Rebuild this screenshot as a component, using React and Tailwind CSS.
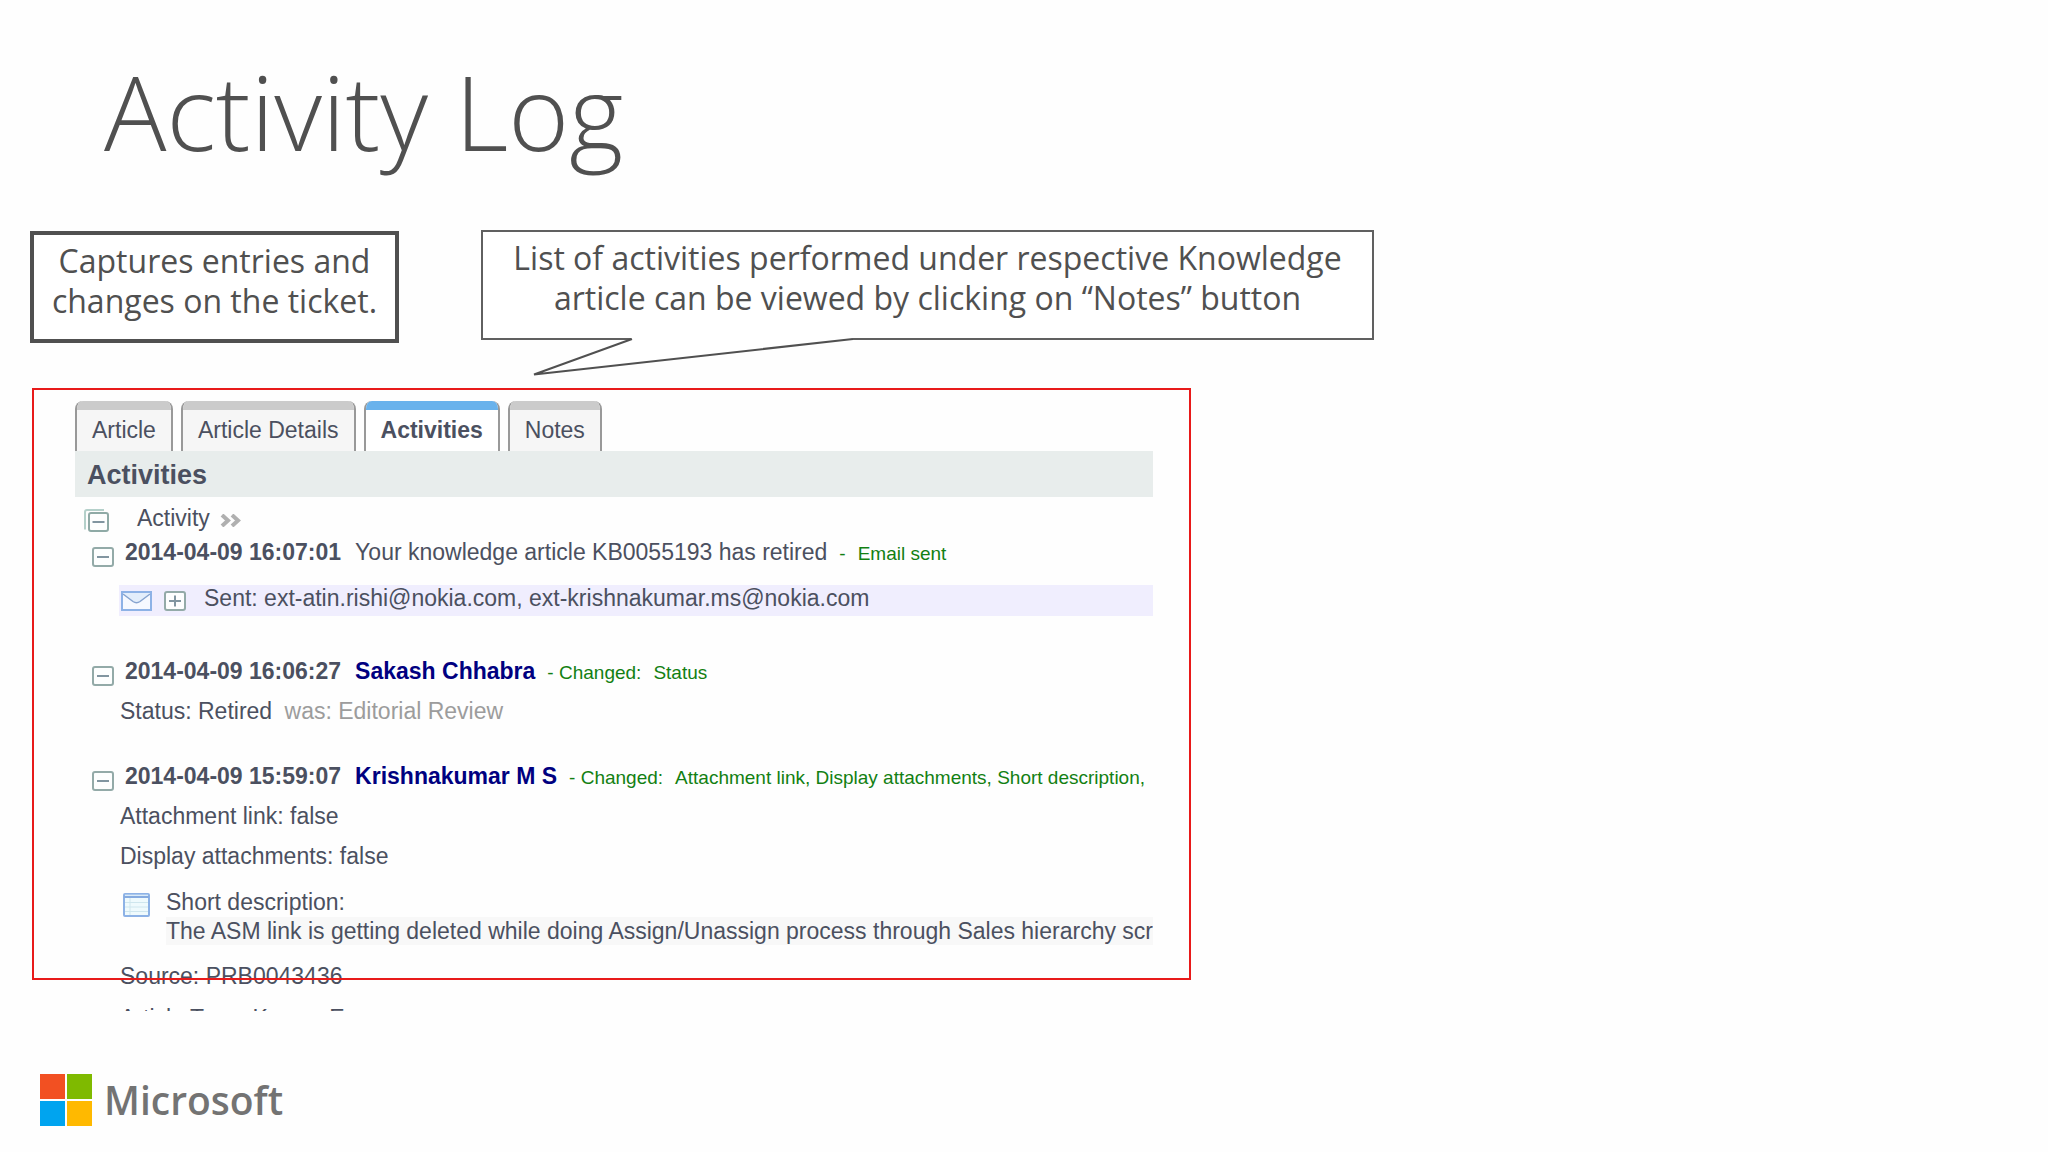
import React, { useState } from 'react';

const tabs = ['Article', 'Article Details', 'Activities', 'Notes'];

// Small square box with a minus or plus sign
const ToggleIcon = ({ open }) => (
  <svg width="22" height="20" viewBox="0 0 22 20" fill="none" strokeWidth="2">
    <rect x="1" y="1" width="20" height="18" rx="2" fill="#fdfefe" stroke="#93aaa8" />
    <path d={open ? 'M5 10H17' : 'M5 10H17M11 4.5V15.5'} stroke="#8195a0" />
  </svg>
);

const StackIcon = () => (
  <svg width="25" height="24" viewBox="0 0 25 24" fill="none" strokeWidth="2">
    <path d="M2 19.5H1V3a2 2 0 0 1 2-2H20" stroke="#b4d0ca" />
    <rect x="5" y="4" width="19" height="18" rx="2" fill="#fdfefe" stroke="#8faaa6" />
    <path d="M8.500 13H20.500" stroke="#8195a0" />
  </svg>
);

const MailIcon = () => (
  <svg width="31" height="20" viewBox="0 0 31 20" fill="none">
    <rect x="1" y="1" width="29" height="18" fill="#f6f9ff" stroke="#8db2e6" strokeWidth="2" />
    <path d="M2 2H29L19 10.500Q15.500 13.500 12 10.500Z" fill="#e3eefb" />
    <path d="M2 3L12 10.500Q15.500 13 19 10.500L29 3" stroke="#86a3cf" strokeWidth="1.500" />
  </svg>
);

const FormIcon = () => (
  <svg width="27" height="24" viewBox="0 0 27 24" fill="none">
    <rect x="1" y="1" width="25" height="22" rx="1" fill="#effafd" stroke="#8db2e6" strokeWidth="2" />
    <path d="M1 4H26" stroke="#86abe0" strokeWidth="2" />
    <path d="M2 2H25" stroke="#c5dcf4" strokeWidth="1" />
    <path d="M7 5V22M2 9.500H25M2 14H25M2 18.500H25" stroke="#cfe6ee" strokeWidth="1" />
  </svg>
);

const Entry = ({ date, open, onToggle, children }) => (
  <div className="flex h-[30px] items-end whitespace-nowrap pl-[17px]">
    <button type="button" aria-label={`Toggle entry ${date}`} onClick={onToggle}>
      <ToggleIcon open={open} />
    </button>
    <div className="flex items-baseline pl-[11px]">
      <span className="font-bold">{date}</span>
      {children}
    </div>
  </div>
);

const Change = ({ children }) => <span className="pl-3 text-[19px] leading-6 text-[#128012]">{children}</span>;

const App = () => {
  const [activeTab, setActiveTab] = useState('Activities');
  const [closed, setClosed] = useState({});

  const toggle = (id) => setClosed({ ...closed, [id]: !closed[id] });

  return (
    <main className="min-h-screen bg-[#fefefe] px-[30px] pt-[59px] font-['Open_Sans',sans-serif] text-[#505050]">
      <h1 className="pl-[74px] text-[104px] font-light leading-none">Activity Log</h1>

      {/* Callouts */}
      <div className="mt-[67px] flex items-start gap-[82px]">
        <div className="mt-px flex h-28 w-[369px] justify-center border-4 border-[#505050] bg-white pt-1.5 text-center text-[32px] leading-10">
          <p>
            Captures entries and
            <br />
            changes on the ticket.
          </p>
        </div>
        <div className="relative h-[110px] w-[893px] border-2 border-[#606060] bg-white pt-1.5 text-center text-[32px] leading-10">
          <p>
            List of activities performed under respective Knowledge
            <br />
            article can be viewed by clicking on “Notes” button
          </p>
          <svg className="absolute left-12 top-[105px]" width="330" height="40" viewBox="0 0 330 40" fill="none">
            <path d="M100 0H322V3L3 38L100 3Z" fill="#fff" />
            <path d="M101 2L3 37.500L322 2" stroke="#505050" strokeWidth="2" strokeLinejoin="bevel" />
          </svg>
        </div>
      </div>

      {/* Activity log panel */}
      <section className="relative ml-0.5 mt-[45px] w-full max-w-[1159px] pl-[43px] pr-[38px] pt-[13px] font-['Liberation_Sans',sans-serif] text-[23px] leading-[30px] text-[#4b5060]">
        <div className="flex gap-2">
          {tabs.map((tab) => (
            <button
              key={tab}
              type="button"
              onClick={() => setActiveTab(tab)}
              className={
                tab === activeTab
                  ? 'flex h-[50px] flex-col overflow-hidden rounded-t-lg border-x-2 border-[#999] bg-white font-bold'
                  : 'flex h-[50px] flex-col overflow-hidden rounded-t-lg border-x-2 border-[#999] bg-[#f6f6f6]'
              }
            >
              <span className={tab === activeTab ? 'h-[9px] w-full bg-[#69b2ec]' : 'h-[9px] w-full bg-[#cbcbcb]'} />
              <span className="px-[15px] pt-[5px]">{tab}</span>
            </button>
          ))}
        </div>

        <h2 className="h-[46px] bg-[#e8edec] pl-3 pt-[9px] text-[27px] font-bold">Activities</h2>

        <div className="h-[514px] overflow-hidden pt-1.5">
          <div className="flex h-[30px] items-end pl-[9px]">
            <button type="button" aria-label="Collapse all">
              <StackIcon />
            </button>
            <span className="pl-7">Activity</span>
            <svg className="mb-1.5 ml-2.5" width="21" height="13" viewBox="0 0 21 13" fill="none" stroke="#b0b0b0" strokeWidth="4">
              <path d="M2 1L8 6.500L2 12M12 1L18 6.500L12 12" />
            </svg>
          </div>

          <div className="mt-1">
            <Entry date="2014-04-09 16:07:01" open={!closed.retired} onToggle={() => toggle('retired')}>
              <span className="pl-3.5">Your knowledge article KB0055193 has retired</span>
              <Change>-</Change>
              <Change>Email sent</Change>
            </Entry>
            {!closed.retired && (
              <div className="ml-11 mt-[18px] flex h-[31px] items-center bg-[#f0eefe] pl-0.5 leading-6">
                <MailIcon />
                <button type="button" aria-label="Show email" className="ml-3">
                  <ToggleIcon open={false} />
                </button>
                <span className="pb-1.5 pl-[18px]">Sent: ext-atin.rishi@nokia.com, ext-krishnakumar.ms@nokia.com</span>
              </div>
            )}
          </div>

          <div className="mt-10">
            <Entry date="2014-04-09 16:06:27" open={!closed.status} onToggle={() => toggle('status')}>
              <a href="#sakash" className="pl-3.5 font-bold text-[#000080]">Sakash Chhabra</a>
              <Change>- Changed:</Change>
              <Change>Status</Change>
            </Entry>
            {!closed.status && (
              <p className="mt-2.5 pl-[45px]">
                Status: Retired <span className="pl-1.5 text-[#9c9c9c]">was: Editorial Review</span>
              </p>
            )}
          </div>

          <div className="mt-[35px]">
            <Entry date="2014-04-09 15:59:07" open={!closed.changes} onToggle={() => toggle('changes')}>
              <a href="#krishnakumar" className="pl-3.5 font-bold text-[#000080]">Krishnakumar M S</a>
              <Change>- Changed:</Change>
              <Change>Attachment link, Display attachments, Short description,</Change>
            </Entry>
            {!closed.changes && (
              <div className="pl-[45px] pt-2.5">
                <p>Attachment link: false</p>
                <p className="mt-2.5">Display attachments: false</p>
                <div className="mt-4 flex items-start pl-[3px]">
                  <span className="mt-1.5 shrink-0">
                    <FormIcon />
                  </span>
                  <div className="ml-4 min-w-0 flex-1">
                    <p>Short description:</p>
                    <p className="overflow-hidden whitespace-nowrap bg-[#f8f8f8] leading-7">
                      The ASM link is getting deleted while doing Assign/Unassign process through Sales hierarchy screen
                    </p>
                  </div>
                </div>
                <p className="mt-4">Source: PRB0043436</p>
                <p className="mt-3">Article Type: Known Error</p>
              </div>
            )}
          </div>
        </div>

        <div className="pointer-events-none absolute inset-x-0 bottom-[31px] top-0 border-2 border-[#e81a1a]" />
      </section>

      {/* Footer logo */}
      <footer className="flex items-center gap-3 pb-6 pl-2.5 pt-[63px]">
        <svg width="52" height="52" viewBox="0 0 52 52">
          <rect width="25" height="25" fill="#f25022" />
          <rect x="27" width="25" height="25" fill="#7fba00" />
          <rect y="27" width="25" height="25" fill="#00a4ef" />
          <rect x="27" y="27" width="25" height="25" fill="#ffb900" />
        </svg>
        <span className="text-[39px] font-semibold leading-[50px] text-[#737373]">Microsoft</span>
      </footer>
    </main>
  );
};

export default App;
